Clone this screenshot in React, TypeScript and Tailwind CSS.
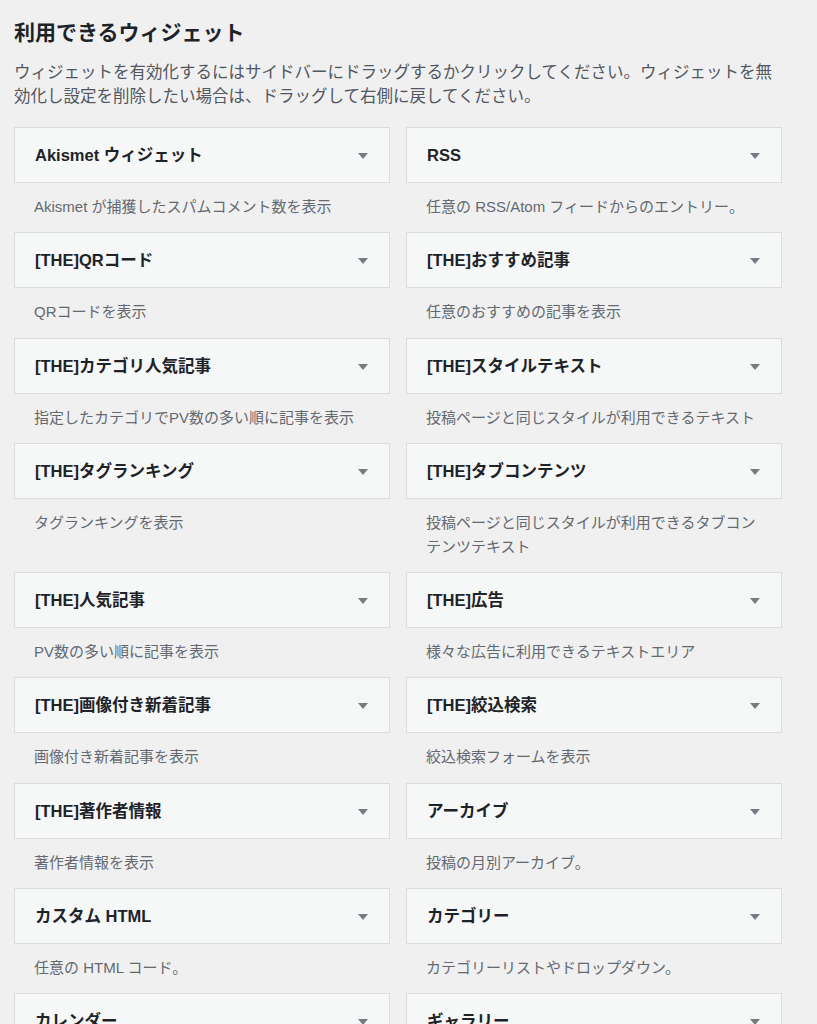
const widgets = [
  { name: 'Akismet ウィジェット', desc: 'Akismet が捕獲したスパムコメント数を表示' },
  { name: 'RSS', desc: '任意の RSS/Atom フィードからのエントリー。' },
  { name: '[THE]QRコード', desc: 'QRコードを表示' },
  { name: '[THE]おすすめ記事', desc: '任意のおすすめの記事を表示' },
  { name: '[THE]カテゴリ人気記事', desc: '指定したカテゴリでPV数の多い順に記事を表示' },
  { name: '[THE]スタイルテキスト', desc: '投稿ページと同じスタイルが利用できるテキスト' },
  { name: '[THE]タグランキング', desc: 'タグランキングを表示' },
  { name: '[THE]タブコンテンツ', desc: '投稿ページと同じスタイルが利用できるタブコンテンツテキスト' },
  { name: '[THE]人気記事', desc: 'PV数の多い順に記事を表示' },
  { name: '[THE]広告', desc: '様々な広告に利用できるテキストエリア' },
  { name: '[THE]画像付き新着記事', desc: '画像付き新着記事を表示' },
  { name: '[THE]絞込検索', desc: '絞込検索フォームを表示' },
  { name: '[THE]著作者情報', desc: '著作者情報を表示' },
  { name: 'アーカイブ', desc: '投稿の月別アーカイブ。' },
  { name: 'カスタム HTML', desc: '任意の HTML コード。' },
  { name: 'カテゴリー', desc: 'カテゴリーリストやドロップダウン。' },
  { name: 'カレンダー', desc: 'サイトの投稿のカレンダー。' },
  { name: 'ギャラリー', desc: '画像ギャラリーを表示します。' },
]

function Widget({ name, desc }: { name: string; desc: string }) {
  return (
    <div>
      <div className="h-[56px] bg-[#f6f7f7] border border-[#dcdcde] flex items-center justify-between pl-5 pr-[21px]">
        <span className="text-[16.5px] font-bold text-[#1d2327] leading-6">{name}</span>
        <svg width="10" height="6" viewBox="0 0 10 6" className="mt-[2px]">
          <path d="M0 0h10L5 6z" fill="#787c82" />
        </svg>
      </div>
      <p className="px-5 pt-3 pb-[13.3px] text-[15px] leading-6 text-[#646970]">{desc}</p>
    </div>
  )
}

export default function App() {
  return (
    <div className="min-h-screen bg-[#f0f0f1] pl-[14px] pt-[19px] font-['Liberation_Sans','Noto_Sans_CJK_JP',sans-serif]">
      <div className="w-[768px]">
        <h2 className="text-[21px] font-bold text-[#1d2327] leading-7">利用できるウィジェット</h2>
        <p className="mt-[13px] text-[16.5px] leading-6 text-[#50575e]">
          ウィジェットを有効化するにはサイドバーにドラッグするかクリックしてください。ウィジェットを無効化し設定を削除したい場合は、ドラッグして右側に戻してください。
        </p>
        <div className="mt-[19px] grid grid-cols-2 gap-x-4 items-start">
          {widgets.map((w) => (
            <Widget key={w.name} name={w.name} desc={w.desc} />
          ))}
        </div>
      </div>
    </div>
  )
}
